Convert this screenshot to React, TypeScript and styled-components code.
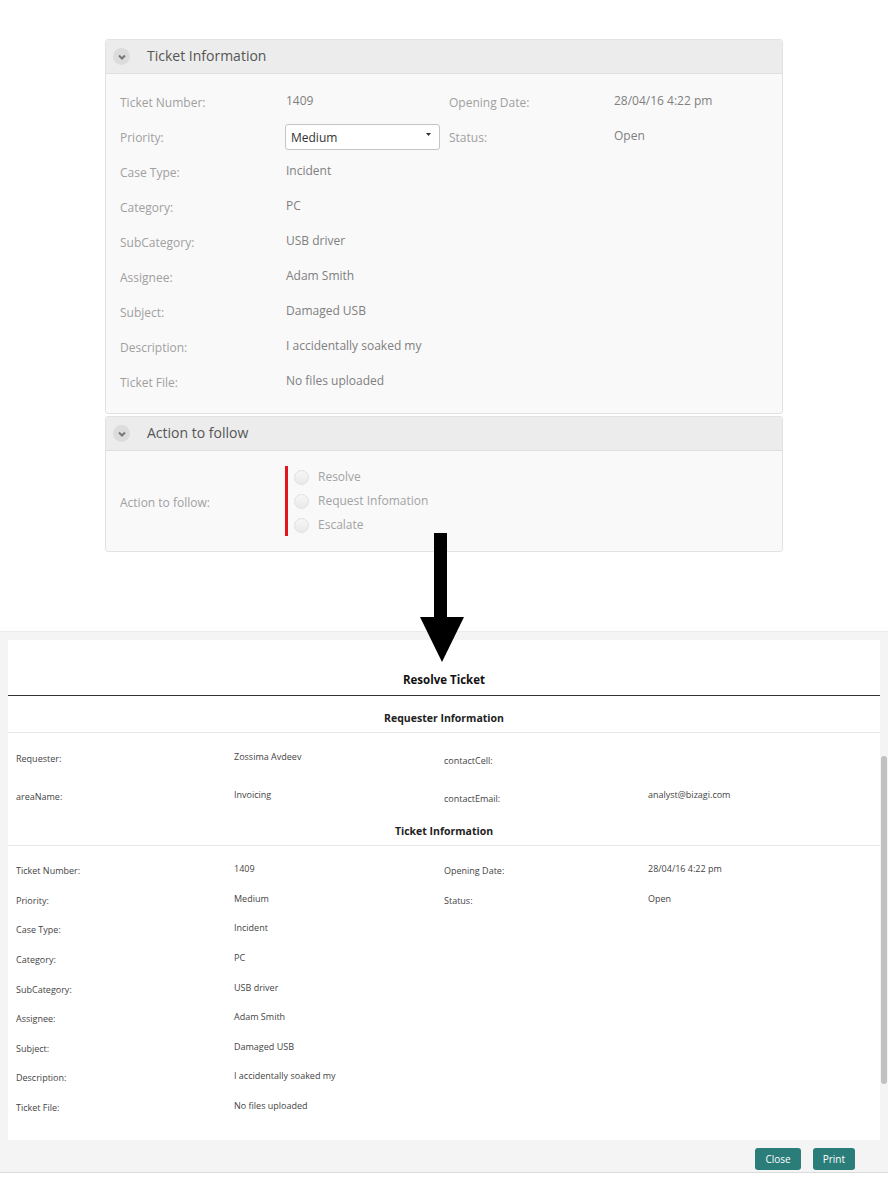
import React from "react";
import styled, { createGlobalStyle } from "styled-components";

const GlobalStyle = createGlobalStyle`
  html, body {
    margin: 0;
    padding: 0;
    background: #ffffff;
    font-family: "Open Sans", "Liberation Sans", sans-serif;
  }
`;

type Field = { label: string; value?: string; select?: boolean };

const ticketLeft: Field[] = [
  { label: "Ticket Number:", value: "1409" },
  { label: "Priority:", value: "Medium", select: true },
  { label: "Case Type:", value: "Incident" },
  { label: "Category:", value: "PC" },
  { label: "SubCategory:", value: "USB driver" },
  { label: "Assignee:", value: "Adam Smith" },
  { label: "Subject:", value: "Damaged USB" },
  { label: "Description:", value: "I accidentally soaked my" },
  { label: "Ticket File:", value: "No files uploaded" },
];

const ticketRight: Field[] = [
  { label: "Opening Date:", value: "28/04/16 4:22 pm" },
  { label: "Status:", value: "Open" },
];

const requesterRows: Field[][] = [
  [
    { label: "Requester:", value: "Zossima Avdeev" },
    { label: "contactCell:", value: "" },
  ],
  [
    { label: "areaName:", value: "Invoicing" },
    { label: "contactEmail:", value: "analyst@bizagi.com" },
  ],
];

const actions = ["Resolve", "Request Infomation", "Escalate"];

const Chevron = () => (
  <Toggle>
    <svg width="10" height="10" viewBox="0 0 10 10">
      <polyline points="2,3.5 5,6.5 8,3.5" fill="none" stroke="#777" strokeWidth="2" />
    </svg>
  </Toggle>
);

export default function App() {
  return (
    <Page>
      <GlobalStyle />
      <FormArea>
        <Panel>
          <PanelHeader>
            <Chevron />
            <PanelTitle>Ticket Information</PanelTitle>
          </PanelHeader>
          <FormBody>
            {ticketLeft.map((f, i) => (
              <FormRow key={f.label}>
                <FormLabel>{f.label}</FormLabel>
                {f.select ? (
                  <Select>
                    <span>{f.value}</span>
                    <svg width="5" height="3" viewBox="0 0 5 3">
                      <polygon points="0,0 5,0 2.5,3" fill="#333" />
                    </svg>
                  </Select>
                ) : (
                  <FormValue>{f.value}</FormValue>
                )}
                {ticketRight[i] ? (
                  <>
                    <FormLabel>{ticketRight[i].label}</FormLabel>
                    <FormValue>{ticketRight[i].value}</FormValue>
                  </>
                ) : null}
              </FormRow>
            ))}
          </FormBody>
        </Panel>
        <Panel>
          <PanelHeader>
            <Chevron />
            <PanelTitle>Action to follow</PanelTitle>
          </PanelHeader>
          <ActionBody>
            <FormLabel>Action to follow:</FormLabel>
            <RadioGroup>
              {actions.map((a) => (
                <RadioRow key={a}>
                  <Radio />
                  <RadioLabel>{a}</RadioLabel>
                </RadioRow>
              ))}
            </RadioGroup>
          </ActionBody>
        </Panel>
      </FormArea>

      <Arrow width="44" height="130" viewBox="0 0 44 130">
        <rect x="14" y="0" width="13" height="86" fill="#000" />
        <polygon points="0,84 44,84 22,129" fill="#000" />
      </Arrow>

      <PrintArea>
        <PrintRow>
          <Sheet>
            <SheetTitle>Resolve Ticket</SheetTitle>
            <SectionTitle>Requester Information</SectionTitle>
            <SheetRows $top={5} $bottom={0}>
              {requesterRows.map((row, i) => (
                <SheetRow key={i} $h={38}>
                  <SheetLabel>{row[0].label}</SheetLabel>
                  <SheetValue>{row[0].value}</SheetValue>
                  <SheetLabel $low>{row[1].label}</SheetLabel>
                  <SheetValue>{row[1].value}</SheetValue>
                </SheetRow>
              ))}
            </SheetRows>
            <SectionTitle $plain>Ticket Information</SectionTitle>
            <SheetRows $top={9} $bottom={19}>
              {ticketLeft.map((f, i) => (
                <SheetRow key={f.label} $h={29.6}>
                  <SheetLabel>{f.label}</SheetLabel>
                  <SheetValue>{f.value}</SheetValue>
                  {ticketRight[i] ? (
                    <>
                      <SheetLabel>{ticketRight[i].label}</SheetLabel>
                      <SheetValue>{ticketRight[i].value}</SheetValue>
                    </>
                  ) : null}
                </SheetRow>
              ))}
            </SheetRows>
          </Sheet>
          <ScrollTrack>
            <ScrollThumb />
          </ScrollTrack>
        </PrintRow>
        <Footer>
          <Button>Close</Button>
          <Button>Print</Button>
        </Footer>
      </PrintArea>
    </Page>
  );
}

const Page = styled.div`
  position: relative;
  width: 888px;
  min-height: 1182px;
  padding-top: 39px;
  box-sizing: border-box;
`;

const FormArea = styled.div`
  width: 678px;
  margin: 0 auto;
  display: flex;
  flex-direction: column;
  gap: 2px;
`;

const Panel = styled.div`
  border: 1px solid #e2e2e2;
  border-radius: 3px;
  background: #f9f9f9;
  overflow: hidden;
`;

const PanelHeader = styled.div`
  height: 33px;
  display: flex;
  align-items: center;
  background: #ececec;
  border-bottom: 1px solid #dedede;
  padding-left: 7px;
`;

const Toggle = styled.div`
  width: 17px;
  height: 17px;
  border-radius: 50%;
  background: #dcdcdc;
  display: flex;
  align-items: center;
  justify-content: center;
`;

const PanelTitle = styled.div`
  margin-left: 17px;
  font-size: 14px;
  color: #555;
  padding-bottom: 2px;
`;

const FormBody = styled.div`
  padding: 10px 0 14px 14px;
`;

const FormRow = styled.div`
  display: grid;
  grid-template-columns: 166px 163px 165px 1fr;
  align-items: center;
  height: 35px;
`;

const FormLabel = styled.div`
  font-size: 12px;
  color: #a0a0a0;
  padding-top: 2px;
`;

const FormValue = styled.div`
  font-size: 12px;
  color: #808080;
  padding-bottom: 3px;
`;

const Select = styled.div`
  width: 155px;
  height: 26px;
  box-sizing: border-box;
  margin-left: -1px;
  border: 1px solid #c4c4c4;
  border-radius: 3px;
  background: #fff;
  display: flex;
  align-items: center;
  justify-content: space-between;
  padding: 2px 8px 0 5px;
  font-size: 12px;
  color: #333;
  svg {
    margin-top: -6px;
  }
`;

const ActionBody = styled.div`
  display: grid;
  grid-template-columns: 165px 1fr;
  align-items: center;
  padding: 15px 0 15px 14px;
`;

const RadioGroup = styled.div`
  border-left: 3px solid #e3141b;
  height: 70px;
  padding-left: 6px;
  display: flex;
  flex-direction: column;
  justify-content: center;
  gap: 8px;
`;

const RadioRow = styled.div`
  display: flex;
  align-items: center;
  gap: 9px;
  height: 16px;
`;

const Radio = styled.span`
  width: 15px;
  height: 15px;
  box-sizing: border-box;
  border-radius: 50%;
  border: 1px solid #e0e0e0;
  background: linear-gradient(#f6f6f6, #e9e9e9);
`;

const RadioLabel = styled.span`
  font-size: 12px;
  color: #a3a3a3;
  padding-bottom: 2px;
`;

const Arrow = styled.svg`
  position: absolute;
  left: 420px;
  top: 533px;
  z-index: 2;
`;

const PrintArea = styled.div`
  margin-top: 79px;
  background: #f4f4f4;
  border-top: 1px solid #ebebeb;
  border-bottom: 1px solid #dcdcdc;
`;

const PrintRow = styled.div`
  display: flex;
  padding: 8px 0 0 8px;
`;

const Sheet = styled.div`
  width: 872px;
  background: #fff;
  font-family: "Open Sans", "Liberation Sans", sans-serif;
`;

const SheetTitle = styled.div`
  padding-top: 32px;
  height: 23px;
  text-align: center;
  font-weight: 700;
  font-size: 11.5px;
  color: #111;
  border-bottom: 1.5px solid #333;
`;

const SectionTitle = styled.div<{ $plain?: boolean }>`
  padding-top: ${(p) => (p.$plain ? 10 : 15)}px;
  height: 21px;
  text-align: center;
  font-weight: 700;
  font-size: 10.5px;
  color: #222;
  border-bottom: 1.5px solid #e6e6e6;
`;

const SheetRows = styled.div<{ $top: number; $bottom: number }>`
  padding: ${(p) => p.$top}px 0 ${(p) => p.$bottom}px 8px;
`;

const SheetRow = styled.div<{ $h: number }>`
  display: grid;
  grid-template-columns: 218px 210px 204px 1fr;
  align-items: center;
  height: ${(p) => p.$h}px;
`;

const SheetLabel = styled.div<{ $low?: boolean }>`
  font-size: 9px;
  color: #444;
  padding-top: ${(p) => (p.$low ? 6 : 2)}px;
`;

const SheetValue = styled.div`
  font-size: 9px;
  color: #444;
  padding-bottom: 2px;
`;

const ScrollTrack = styled.div`
  width: 8px;
  display: flex;
  justify-content: center;
`;

const ScrollThumb = styled.div`
  width: 6px;
  height: 328px;
  margin-top: 116px;
  border-radius: 3px;
  background: #c1c1c1;
`;

const Footer = styled.div`
  display: flex;
  justify-content: flex-end;
  gap: 12px;
  padding: 8px 33px 2px 0;
`;

const Button = styled.button`
  height: 22px;
  padding: 0 10px;
  border: none;
  border-radius: 3px;
  background: #2a7d79;
  color: #fff;
  font-family: "Open Sans", "Liberation Sans", sans-serif;
  font-size: 10px;
`;
